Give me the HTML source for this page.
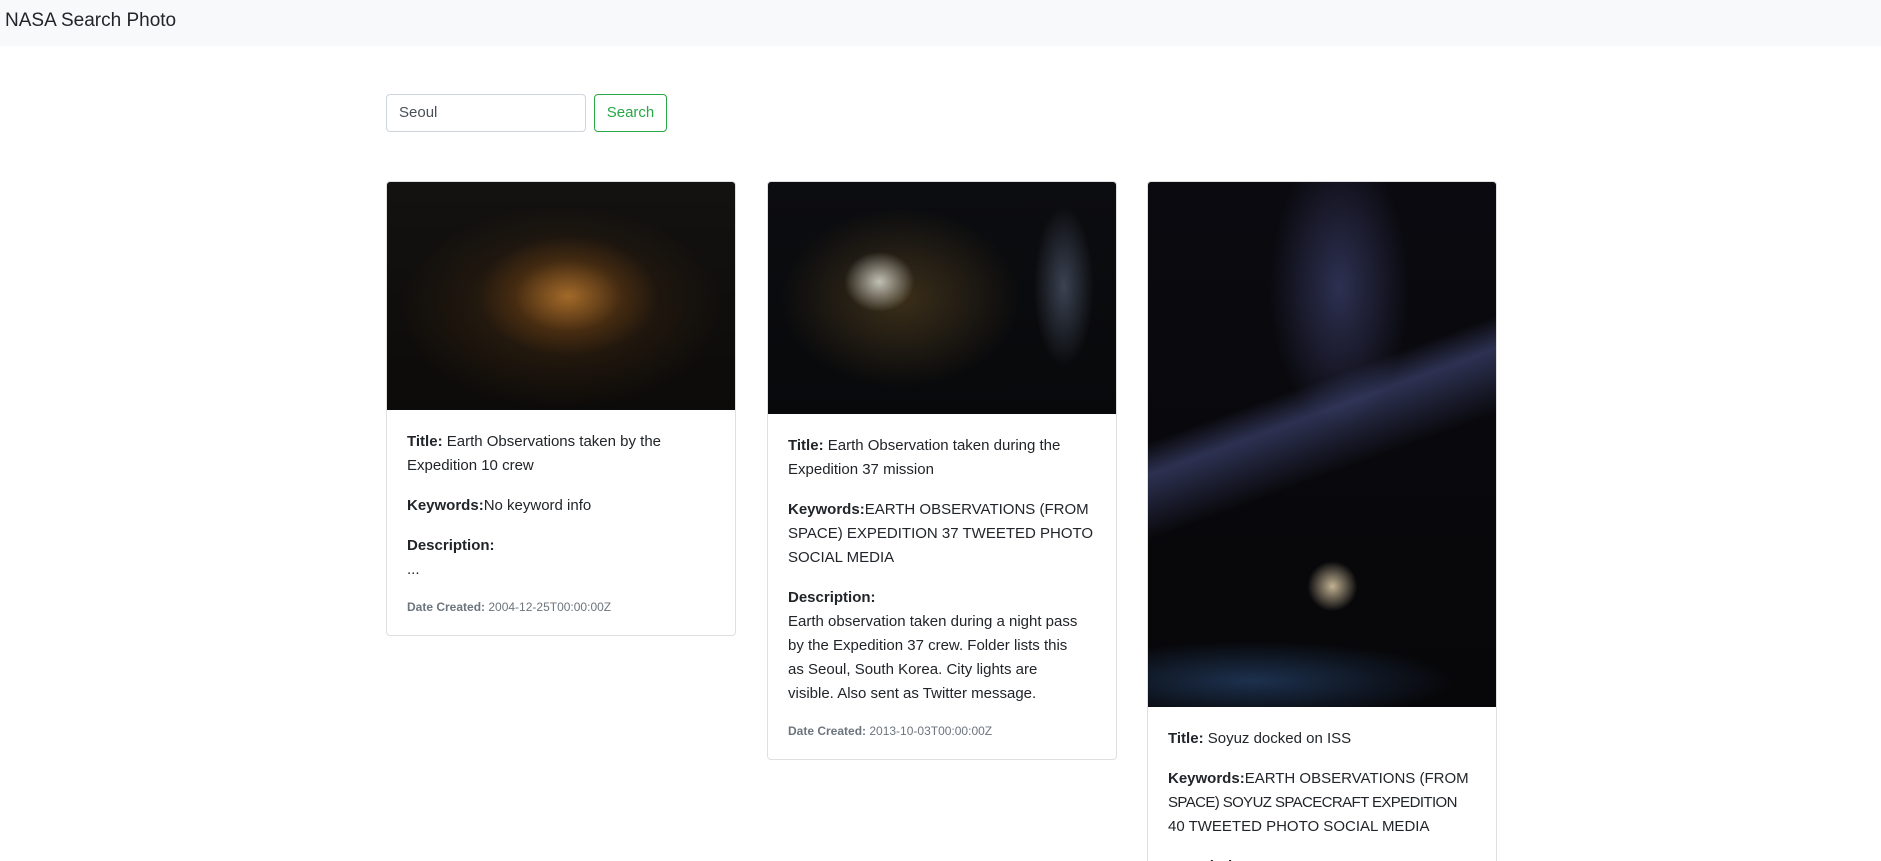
<!DOCTYPE html>
<html style="overflow:hidden;height:861px"><head><meta charset="utf-8"><style>
*{box-sizing:border-box;margin:0;padding:0}
body{width:1881px;height:861px;overflow:hidden;background:#fff;font-family:"Liberation Sans",sans-serif;color:#212529;font-size:15px;line-height:24px;position:relative}
.nav{position:absolute;left:0;top:0;width:1881px;height:46px;background:#f8f9fa}
.brand{position:absolute;left:5px;top:7px;font-size:19px;line-height:28px;color:#212529}
.inp{position:absolute;left:386px;top:94px;width:200px;height:38px;border:1px solid #ced4da;border-radius:4px;padding:6px 12px;font-size:15px;color:#495057}
.btn{position:absolute;left:594px;top:94px;width:73px;height:38px;border:1px solid #28a745;border-radius:4px;color:#28a745;text-align:center;line-height:36px;font-size:15px}
.card{position:absolute;top:181px;width:350px;border:1px solid #dfdfdf;border-radius:4px;overflow:hidden;background:#fff}
.img{width:100%;background:#0a0a0c}
.body{padding:20px}
.body p{margin-bottom:16px}
.date{font-size:12px;color:#6c757d;line-height:18px}
b{font-weight:bold}
.nw{white-space:nowrap;letter-spacing:-0.6px}
</style></head><body>
<div class="nav"><div class="brand">NASA Search Photo</div></div>
<div class="inp">Seoul</div>
<div class="btn">Search</div>

<div class="card" style="left:386px;height:455px">
<div class="img" style="height:228px;background:radial-gradient(ellipse 90px 60px at 52% 50%,rgba(200,130,50,.75),rgba(120,70,20,.35) 60%,transparent 100%),radial-gradient(ellipse 160px 100px at 50% 55%,rgba(90,55,20,.5),transparent),linear-gradient(#141210,#0d0b09)"></div>
<div class="body">
<p><b>Title:</b> Earth Observations taken by the Expedition 10 crew</p>
<p><b>Keywords:</b>No keyword info</p>
<p><b>Description:</b><br>...</p>
<div class="date"><b>Date Created:</b> 2004-12-25T00:00:00Z</div>
</div></div>

<div class="card" style="left:767px;height:579px">
<div class="img" style="height:232px;background:radial-gradient(ellipse 35px 30px at 32% 43%,rgba(230,230,220,.8),transparent),radial-gradient(ellipse 120px 90px at 38% 50%,rgba(120,90,40,.45),transparent),radial-gradient(ellipse 30px 80px at 85% 45%,rgba(150,170,210,.35),transparent),linear-gradient(#0c0d10,#08090b)"></div>
<div class="body">
<p><b>Title:</b> Earth Observation taken during the Expedition 37 mission</p>
<p><b>Keywords:</b>EARTH OBSERVATIONS (FROM SPACE) EXPEDITION 37 TWEETED PHOTO SOCIAL MEDIA</p>
<p><b>Description:</b><br>Earth observation taken during a night pass by the Expedition 37 crew. Folder lists this<br>as Seoul, South Korea. City lights are<br>visible. Also sent as Twitter message.</p>
<div class="date"><b>Date Created:</b> 2013-10-03T00:00:00Z</div>
</div></div>

<div class="card" style="left:1147px;height:680px;border-bottom:none;border-radius:4px 4px 0 0">
<div class="img" style="height:525px;background:radial-gradient(ellipse 25px 25px at 53% 77%,rgba(240,220,180,.8),transparent),linear-gradient(160deg,transparent 40%,rgba(80,90,150,.5) 45%,transparent 55%),radial-gradient(ellipse 70px 140px at 55% 20%,rgba(60,65,110,.7),transparent),radial-gradient(ellipse 200px 40px at 30% 95%,rgba(60,110,180,.4),transparent),linear-gradient(#0b0a10,#070709)"></div>
<div class="body">
<p><b>Title:</b> Soyuz docked on ISS</p>
<p><b>Keywords:</b>EARTH OBSERVATIONS (FROM<br><span class="nw">SPACE) SOYUZ SPACECRAFT EXPEDITION</span><br>40 TWEETED PHOTO SOCIAL MEDIA</p>
<p><b>Description:</b></p>
</div></div>
</body></html>
